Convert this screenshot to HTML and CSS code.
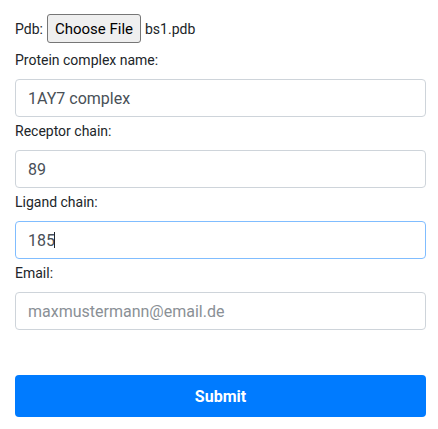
FILE: index.html
```html
<!DOCTYPE html>
<html>
<head>
<meta charset="utf-8">
<link rel="stylesheet" href="styles.css">
</head>
<body>
<form class="form">
  <div class="file-row">
    <span class="file-label">Pdb:</span>
    <button type="button" class="file-btn">Choose File</button>
    <span class="file-name">bs1.pdb</span>
  </div>
  <label class="label">Protein complex name:</label>
  <input class="field" type="text" value="1AY7 complex">
  <label class="label">Receptor chain:</label>
  <input class="field" type="text" value="89">
  <label class="label">Ligand chain:</label>
  <div class="field-wrap">
    <input class="field focused" type="text" value="185">
    <span class="caret"></span>
  </div>
  <label class="label">Email:</label>
  <input class="field" type="text" placeholder="maxmustermann@email.de">
  <button type="button" class="submit">Submit</button>
</form>
</body>
</html>
```
FILE: styles.css
```css
* { box-sizing: border-box; }
body {
  margin: 0;
  font-family: Roboto, "Liberation Sans", sans-serif;
  color: #212529;
  background: #fff;
}
.form {
  display: flex;
  flex-direction: column;
  padding: 14px 12px 0 15px;
}
.file-row {
  display: flex;
  align-items: center;
  gap: 4px;
  font-size: 14px;
  height: 29px;
}
.file-btn {
  font-family: Roboto, "Liberation Sans", sans-serif;
  font-size: 15px;
  color: #000;
  background: #efefef;
  border: 1px solid #767676;
  border-radius: 3px;
  height: 29px;
  padding: 0 7px;
  margin: 0;
}
.label {
  display: block;
  font-size: 14px;
  line-height: 21px;
  margin: 7px 0 8px;
}
.file-row + .label { margin-top: 7px; }
.field, .field-wrap { margin-bottom: 0; }
.field {
  display: block;
  width: 100%;
  height: 38px;
  padding: 6px 12px;
  font-family: Roboto, "Liberation Sans", sans-serif;
  font-size: 16px;
  color: #495057;
  background: #fff;
  border: 1px solid #ced4da;
  border-radius: 4px;
  outline: none;
  margin: 0;
}
.field + .label, .field-wrap + .label { margin-top: 4px; }
.field::placeholder { color: #8a9096; }
.field.focused { border-color: #80bdff; }
.field-wrap { position: relative; }
.caret {
  position: absolute;
  left: 39px;
  top: 11px;
  width: 1px;
  height: 16px;
  background: #212529;
}
.submit {
  margin-top: 45px;
  height: 42px;
  width: 100%;
  background: #007bff;
  color: #fff;
  border: none;
  border-radius: 4px;
  font-family: Roboto, "Liberation Sans", sans-serif;
  font-size: 16px;
  font-weight: 700;
}
```
